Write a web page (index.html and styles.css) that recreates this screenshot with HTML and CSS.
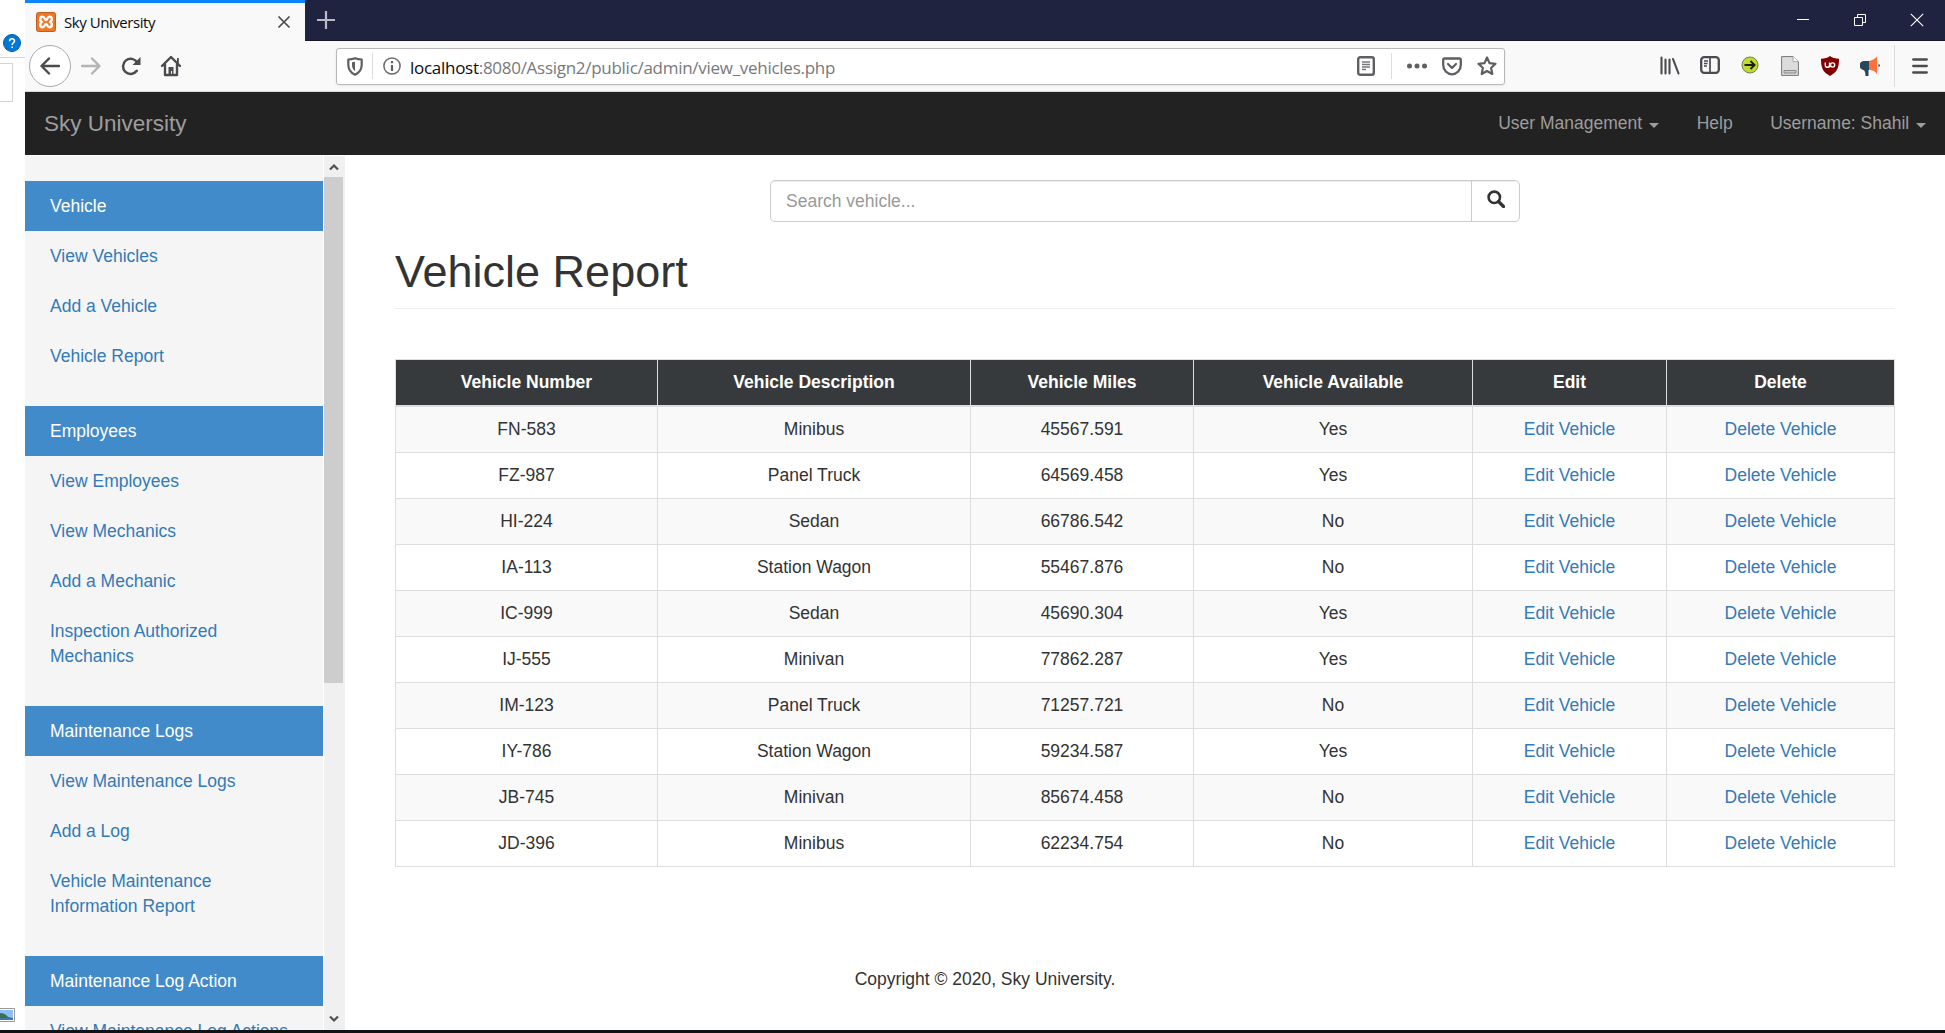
FILE: index.html
```html
<!DOCTYPE html>
<html lang="en">
<head>
<meta charset="utf-8">
<title>Sky University</title>
<link rel="stylesheet" href="styles.css">
</head>
<body>
<div class="screen">
  <aside class="behind">
    <div class="behind-top"><svg class="help" width="18" height="18" viewBox="0 0 18 18"><circle cx="9" cy="9" r="8.5" fill="#0078d7" stroke="#0a5da5"/><path d="M6.6 7.2C6.6 3.9 11.5 4 11.5 6.9c0 1.8-2.3 1.9-2.3 4M9.2 12.4v1.6" fill="none" stroke="#fff" stroke-width="1.6"/></svg></div>
    <div class="behind-box"></div>
    <svg class="thumb" width="15" height="14" viewBox="0 0 15 14"><path d="M0 .5h14.500v13H0" fill="#fff" stroke="#999"/><path d="M0 2h13v10H0z" fill="#8fc0f5"/><path d="M0 5q5 0 8 4l5 1v2H0z" fill="#3c6f56"/><path d="M0 10h13v2H0z" fill="#3d78a8"/></svg>
  </aside>
  <div class="window">
    <header class="tabs">
      <div class="tab">
        <svg width="20" height="20" viewBox="0 0 20 20"><rect x=".5" y=".5" width="19" height="19" rx="2" fill="#f37623" stroke="#b85f2a"/><path d="M6 10C3.500 9 3.500 4.800 6.500 4.800c2.500 0 2 3.200 3.500 3.200s1-3.200 3.500-3.200c3 0 3 4.200.5 5.200 2.500 1 2.500 5.200-.5 5.200-2.500 0-2-3.200-3.500-3.200s-1 3.200-3.500 3.200C3.500 15.200 3.500 11 6 10z" fill="none" stroke="#fff" stroke-width="2.400" stroke-linejoin="round"/></svg>
        <span class="tab-title">Sky University</span>
        <svg class="tab-close" width="14" height="14" viewBox="0 0 14 14"><path d="M1.500 1.500l11 11M12.500 1.500l-11 11" stroke="#4a4a4f" stroke-width="1.700"/></svg>
      </div>
      <svg class="new-tab" width="18" height="18" viewBox="0 0 18 18"><path d="M9 0v18M0 9h18" stroke="#b9bac4" stroke-width="2.200"/></svg>
      <div class="win-buttons">
        <svg width="14" height="14" viewBox="0 0 14 14"><path d="M1 6.500h12" stroke="#fff"/></svg>
        <svg width="14" height="14" viewBox="0 0 14 14" fill="none" stroke="#fff"><path d="M1.500 4.500h8v8h-8zM4.500 4V1.500h8v8H10"/></svg>
        <svg width="14" height="14" viewBox="0 0 14 14"><path d="M.8.8l12.400 12.400M13.200.8L.8 13.200" stroke="#fff" stroke-width="1.100"/></svg>
      </div>
    </header>
    <div class="toolbar">
      <span class="back"><svg width="20" height="18" viewBox="0 0 20 18"><path d="M19 9H2M9 1.500L1.500 9 9 16.500" fill="none" stroke="#4a4a4f" stroke-width="2.400" stroke-linecap="round" stroke-linejoin="round"/></svg></span>
      <span class="tool"><svg width="20" height="18" viewBox="0 0 20 18"><path d="M1 9h17M11 1.500L18.500 9 11 16.500" fill="none" stroke="#b4b4b7" stroke-width="2.400" stroke-linecap="round" stroke-linejoin="round"/></svg></span>
      <span class="tool"><svg width="20" height="20" viewBox="0 0 20 20"><path d="M15.800 14.800A7.600 7.600 0 1 1 16.200 6.500" fill="none" stroke="#4a4a4f" stroke-width="2.500" stroke-linecap="round"/><path d="M19.500 1v8h-8z" fill="#4a4a4f"/></svg></span>
      <span class="tool"><svg width="22" height="22" viewBox="0 0 22 22"><path d="M2 11L11 2l9 9M5 9.500V20h12V9.500" fill="none" stroke="#4a4a4f" stroke-width="2.400" stroke-linecap="round" stroke-linejoin="round"/><path d="M8.500 19v-7h5v7h-1.500v-3h-1v3z" fill="#4a4a4f"/><path d="M17 3h1.800v6H17z" fill="#4a4a4f"/></svg></span>
      <div class="urlbar">
        <span class="shield"><svg width="16" height="19" viewBox="0 0 16 19"><path d="M8 1.300c2.200.9 4.300 1.200 6.700 1.200v5.200c0 4.700-2.500 8-6.700 10-4.200-2-6.700-5.300-6.700-10V2.500C3.700 2.500 5.800 2.200 8 1.300z" fill="none" stroke="#5f5f63" stroke-width="2.200" stroke-linejoin="round"/><path d="M8 4.800v9.300c-2-1.400-3-3.500-3-6.400V5.300z" fill="#5f5f63"/></svg></span>
        <span class="info"><svg width="18" height="18" viewBox="0 0 18 18"><circle cx="9" cy="9" r="8.100" fill="none" stroke="#6a6a6e" stroke-width="1.500"/><path d="M9 4v2.200M9 8v6" stroke="#5f5f63" stroke-width="2.200"/></svg></span>
        <span class="url"><b>localhost</b>:8080/Assign2/public/admin/view_vehicles.php</span>
        <span class="reader"><svg width="18" height="20" viewBox="0 0 18 20"><rect x="1.200" y="1.200" width="15.600" height="17.600" rx="2" fill="none" stroke="#5f5f63" stroke-width="2.400"/><path d="M5 6h8M5 8.500h8M5 11h8M5 13.500h4" stroke="#77777b" stroke-width="1.300"/></svg></span>
        <span class="dots"><svg width="20" height="6" viewBox="0 0 20 6" fill="#5f5f63"><circle cx="2.500" cy="3" r="2.500"/><circle cx="10" cy="3" r="2.500"/><circle cx="17.500" cy="3" r="2.500"/></svg></span>
        <span class="pocket"><svg width="20" height="19" viewBox="0 0 20 19" fill="none" stroke="#5f5f63" stroke-width="2.300" stroke-linecap="round" stroke-linejoin="round"><path d="M2.500 1.500h15q1.300 0 1.300 1.300V8c0 5-4 9.300-8.800 9.300S1.200 13 1.200 8V2.800q0-1.300 1.300-1.300z"/><path d="M6 7l4 4 4-4"/></svg></span>
        <span class="star"><svg width="20" height="20" viewBox="0 0 20 20"><path d="M10 1.500l2.500 5.600 6 .7-4.400 4.200 1.200 6L10 15l-5.300 3 1.200-6-4.400-4.200 6-.7z" fill="none" stroke="#5f5f63" stroke-width="2.200" stroke-linejoin="round"/></svg></span>
      </div>
      <div class="tools">
        <span class="tool"><svg width="20" height="19" viewBox="0 0 20 19" stroke="#4a4a4f" stroke-width="2.100" stroke-linecap="round"><path d="M1.500 1.500v16M5.500 3.500v14M9.500 3.500v14M13 3l5.500 14.500"/></svg></span>
        <span class="tool"><svg width="20" height="18" viewBox="0 0 20 18" fill="none" stroke="#4a4a4f"><rect x="1.200" y="1.200" width="17.600" height="15.600" rx="3" stroke-width="2.300"/><path d="M10 2v14" stroke-width="1.700"/><path d="M4 5h4M4 7.500h3.500M4 10h3" stroke-width="1.300"/></svg></span>
        <span class="tool"><svg width="18" height="18" viewBox="0 0 18 18"><circle cx="9" cy="9" r="8" fill="#c0dc2c" stroke="#777b55"/><path d="M3.500 9h10M9.500 5l4 4-4 4" fill="none" stroke="#18200a" stroke-width="2"/></svg></span>
        <span class="tool"><svg width="18" height="20" viewBox="0 0 18 20"><path d="M.6.6H12l5.400 5v13.800H.6z" fill="#dcdcdc" stroke="#777"/><path d="M12 .6v5h5.400" fill="#fff" stroke="#aaa"/><path d="M3 14.500h12v2.500H3z" fill="#ccc" stroke="#888"/></svg></span>
        <span class="tool"><svg width="18" height="20" viewBox="0 0 18 20"><path d="M9 0c2.500 1.800 5 2.700 9 2.800 0 8.500-1.300 13-9 17.200C1.300 15.800 0 11.300 0 2.800 4 2.700 6.500 1.800 9 0z" fill="#800000"/><path d="M4.300 6.500v2.700a2.100 2.100 0 0 0 4.200 0v-2.700M8.500 9v2.500" fill="none" stroke="#fff" stroke-width="1.400"/><circle cx="11.600" cy="9" r="2.100" fill="none" stroke="#fff" stroke-width="1.400"/></svg></span>
        <span class="tool"><svg width="20" height="20" viewBox="0 0 20 20"><path d="M9 5H4.500a4.200 4.200 0 0 0-1 8.900q2 .8 2 6.100H8.500v-6H9z" fill="#28465c"/><path d="M9 5c4-.5 6-2.500 8-4.500V18c-2-2.500-4-4-8-4.300z" fill="#ff7139"/><path d="M17.500.5h1v18h-1z" fill="#cfe6f7"/><path d="M18.500 8q1.500.2 1.500 1.500t-1.500 1.500z" fill="#28465c"/></svg></span>
      </div>
      <span class="menu"><svg width="16" height="16" viewBox="0 0 16 16"><path d="M1.200 1.500h13.600M1.200 8h13.600M1.200 14.500h13.600" stroke="#4a4a4f" stroke-width="2.300" stroke-linecap="round"/></svg></span>
    </div>
    <nav class="navbar">
      <a class="brand">Sky University</a>
      <a class="nav-link">User Management <i class="caret"></i></a>
      <a class="nav-link">Help</a>
      <a class="nav-link">Username: Shahil <i class="caret"></i></a>
    </nav>
    <div class="page">
      <div class="sidebar">
        <ul><li class="active">Vehicle</li><li>View Vehicles</li><li>Add a Vehicle</li><li>Vehicle Report</li></ul>
        <ul><li class="active">Employees</li><li>View Employees</li><li>View Mechanics</li><li>Add a Mechanic</li><li>Inspection Authorized<br>Mechanics</li></ul>
        <ul><li class="active">Maintenance Logs</li><li>View Maintenance Logs</li><li>Add a Log</li><li>Vehicle Maintenance<br>Information Report</li></ul>
        <ul><li class="active">Maintenance Log Action</li><li>View Maintenance Log Actions</li></ul>
      </div>
      <div class="scrollbar">
        <svg width="10" height="8" viewBox="0 0 10 8"><path d="M1 6.500l4-4 4 4" fill="none" stroke="#505050" stroke-width="2.200"/></svg>
        <div class="scroll-thumb"></div>
        <svg width="10" height="8" viewBox="0 0 10 8"><path d="M1 1.500l4 4 4-4" fill="none" stroke="#505050" stroke-width="2.200"/></svg>
      </div>
      <main class="main">
        <div class="search"><span class="search-field">Search vehicle...</span><span class="search-button"><svg width="18" height="18" viewBox="0 0 18 18"><circle cx="7.300" cy="7.300" r="5.700" fill="none" stroke="#333" stroke-width="2.600"/><path d="M11.500 11.500l5 5" stroke="#333" stroke-width="3.200" stroke-linecap="round"/></svg></span></div>
        <h1>Vehicle Report</h1>
        <table>
          <colgroup><col class="c-number"><col class="c-desc"><col class="c-miles"><col class="c-avail"><col class="c-edit"><col class="c-delete"></colgroup>
          <thead><tr><th>Vehicle Number</th><th>Vehicle Description</th><th>Vehicle Miles</th><th>Vehicle Available</th><th>Edit</th><th>Delete</th></tr></thead>
          <tbody>
            <tr><td>FN-583</td><td>Minibus</td><td>45567.591</td><td>Yes</td><td><a>Edit Vehicle</a></td><td><a>Delete Vehicle</a></td></tr>
            <tr><td>FZ-987</td><td>Panel Truck</td><td>64569.458</td><td>Yes</td><td><a>Edit Vehicle</a></td><td><a>Delete Vehicle</a></td></tr>
            <tr><td>HI-224</td><td>Sedan</td><td>66786.542</td><td>No</td><td><a>Edit Vehicle</a></td><td><a>Delete Vehicle</a></td></tr>
            <tr><td>IA-113</td><td>Station Wagon</td><td>55467.876</td><td>No</td><td><a>Edit Vehicle</a></td><td><a>Delete Vehicle</a></td></tr>
            <tr><td>IC-999</td><td>Sedan</td><td>45690.304</td><td>Yes</td><td><a>Edit Vehicle</a></td><td><a>Delete Vehicle</a></td></tr>
            <tr><td>IJ-555</td><td>Minivan</td><td>77862.287</td><td>Yes</td><td><a>Edit Vehicle</a></td><td><a>Delete Vehicle</a></td></tr>
            <tr><td>IM-123</td><td>Panel Truck</td><td>71257.721</td><td>No</td><td><a>Edit Vehicle</a></td><td><a>Delete Vehicle</a></td></tr>
            <tr><td>IY-786</td><td>Station Wagon</td><td>59234.587</td><td>Yes</td><td><a>Edit Vehicle</a></td><td><a>Delete Vehicle</a></td></tr>
            <tr><td>JB-745</td><td>Minivan</td><td>85674.458</td><td>No</td><td><a>Edit Vehicle</a></td><td><a>Delete Vehicle</a></td></tr>
            <tr><td>JD-396</td><td>Minibus</td><td>62234.754</td><td>No</td><td><a>Edit Vehicle</a></td><td><a>Delete Vehicle</a></td></tr>
          </tbody>
        </table>
        <footer>Copyright © 2020, Sky University.</footer>
      </main>
    </div>
  </div>
</div>
<div class="taskbar"></div>
</body>
</html>
```
FILE: styles.css
```css
* { box-sizing: border-box; }
body {
  margin: 0;
  width: 1945px;
  height: 1033px;
  overflow: hidden;
  background: #fff;
  color: #333;
  font: 17.5px/25px "Liberation Sans", Arial, sans-serif;
}
svg { display: block; flex: none; }
.screen { display: flex; height: 1030px; }
.taskbar { height: 3px; background: #101213; }

/* slice of the window behind the browser */
.behind { flex: none; width: 25px; display: flex; flex-direction: column; }
.behind-top { height: 58px; padding: 34px 0 0 3px; border-bottom: 1px solid #d5d5d5; }
.behind-box { width: 13px; height: 39px; margin-top: 5px; border: 1px solid #d5d5d5; border-left: 0; }
.thumb { margin-top: auto; margin-bottom: 8px; }

.window { flex: 1; min-width: 0; display: flex; flex-direction: column; }
.tabs { height: 41px; display: flex; align-items: center; background: #202340; border-bottom: 1px solid #15162f; }
.tab {
  width: 280px;
  height: 41px;
  padding: 0 14px 0 11px;
  display: flex;
  align-items: center;
  background: #f9f9fa;
  border-top: 3px solid #0a84ff;
}
.tab-title { margin-left: 8px; font: 15px/20px "Open Sans", sans-serif; letter-spacing: -0.45px; color: #0c0c0d; }
.tab-close { margin-left: auto; }
.new-tab { margin-left: 12px; }
.win-buttons { margin-left: auto; padding-right: 21px; display: flex; gap: 43px; }

.toolbar { height: 51px; display: flex; align-items: center; background: #f9f9fa; border-bottom: 1px solid #d7d7db; padding-left: 4px; }
.back { width: 42px; height: 42px; display: flex; align-items: center; justify-content: center; border: 1px solid #aaa; border-radius: 50%; background: #fff; }
.tool { width: 40px; display: flex; justify-content: center; }
.urlbar {
  width: 1169px;
  height: 37px;
  margin-left: 145px;
  display: flex;
  align-items: center;
  background: #fff;
  border: 1px solid #b8b8bb;
  border-radius: 3px;
  box-shadow: 0 1px 3px rgba(0,0,0,.08);
}
.shield { width: 36px; height: 26px; display: flex; align-items: center; justify-content: center; border-right: 1px solid #dcdcde; }
.info { width: 37px; display: flex; justify-content: center; }
.url { font: 17px/26px "Open Sans", sans-serif; letter-spacing: -0.28px; color: #78787c; padding-top: 3px; white-space: nowrap; }
.url b { font-weight: 400; color: #0c0c0d; }
.reader { margin-left: auto; height: 26px; padding-right: 16px; display: flex; align-items: center; border-right: 1px solid #dcdcde; }
.dots { margin-left: 15px; }
.pocket { margin-left: 15px; }
.star { margin: 0 7px 0 15px; }
.tools { display: flex; margin-left: auto; }
.menu { width: 51px; height: 42px; margin-left: 4px; display: flex; align-items: center; justify-content: center; border-left: 1px solid #dcdcde; }

.navbar { height: 63px; padding: 0 0 0 19px; display: flex; align-items: center; background: #222; color: #9d9d9d; }
.brand { margin-right: auto; font-size: 22.5px; }
.nav-link { padding: 0 18.75px; display: flex; align-items: center; }
.caret { margin: 3px 0 0 7px; border: 5px solid transparent; border-top-color: #9d9d9d; border-bottom: 0; }

.page { flex: 1; min-height: 0; display: flex; }
.sidebar { flex: none; width: 298px; margin-top: 1px; padding-top: 25px; background: #f5f5f5; overflow: hidden; color: #337ab7; }
.sidebar ul { list-style: none; margin: 0 0 25px; padding: 0; }
.sidebar li { padding: 12.5px 25px; white-space: nowrap; }
.sidebar .active { background: #428bca; color: #fff; }
.scrollbar { flex: none; width: 21px; margin: 1px 0 0 1px; padding: 7px 0 7px; display: flex; flex-direction: column; background: #f0f0f0; }
.scrollbar svg { margin-left: 5px; }
.scroll-thumb { width: 19px; height: 506px; margin: 6px 0 auto; background: #cdcdcd; }

.main { flex: 1; padding: 25px 50px 0; }
.search { width: 750px; height: 42px; margin-left: 375px; display: flex; border: 1px solid #ccc; border-radius: 5px; box-shadow: inset 0 1px 1px rgba(0,0,0,.075); }
.search-field { flex: 1; padding: 8px 15px 0; color: #999; }
.search-button { width: 48px; display: flex; justify-content: center; padding-top: 9px; border-left: 1px solid #ccc; }
h1 { margin: 25px 0 50px; height: 62px; font-size: 45px; line-height: 49.5px; font-weight: 400; border-bottom: 1px solid #eee; }
table { width: 1500px; table-layout: fixed; border-collapse: separate; border-spacing: 0; border-right: 1px solid #ddd; text-align: center; }
.c-number { width: 262px; } .c-desc { width: 313px; } .c-miles { width: 223px; }
.c-avail { width: 279px; } .c-edit { width: 194px; } .c-delete { width: 228px; }
th, td { padding: 0; border: 0 solid #ddd; }
th { height: 48px; background: #373a3c; color: #fff; border-width: 1px 0 2px 1px; }
td { height: 46px; border-width: 0 0 1px 1px; }
td a { color: #337ab7; }
tbody tr:nth-child(odd) { background: #f9f9f9; }
footer { margin: 100px -50px 0; padding-right: 320px; text-align: center; }
```
